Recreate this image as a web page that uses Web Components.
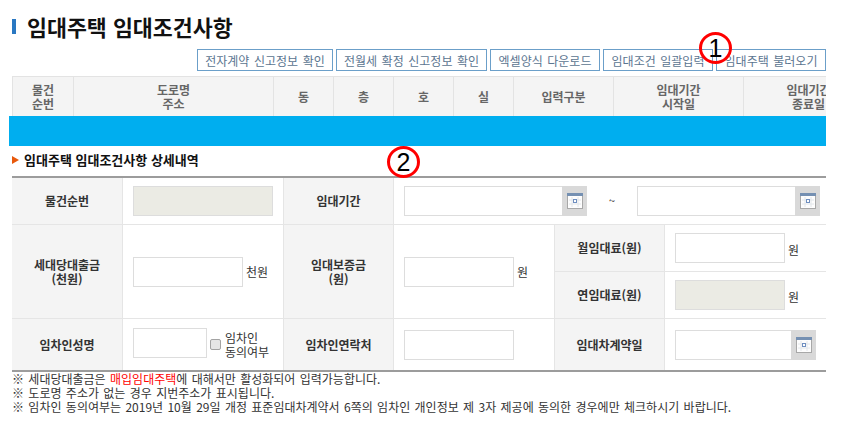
<!DOCTYPE html>
<html lang="ko">
<head>
<meta charset="utf-8">
<title>임대주택 임대조건사항</title>
<style>
  html, body { margin: 0; padding: 0; background: #fff; }
  body {
    width: 849px; height: 427px; overflow: hidden; position: relative;
    font-family: "Noto Sans CJK KR", "Noto Sans", sans-serif;
    color: #222;
  }
</style>
</head>
<body>
<rent-page>
  <page-title>임대주택 임대조건사항</page-title>
  <action-bar>
    <action-button style="width:136px">전자계약 신고정보 확인</action-button>
    <action-button style="width:151px">전월세 확정 신고정보 확인</action-button>
    <action-button style="width:110px">엑셀양식 다운로드</action-button>
    <action-button style="width:110px">임대조건 일괄입력</action-button>
    <action-button style="width:110px">임대주택 불러오기</action-button>
  </action-bar>
  <list-table></list-table>
  <section-head>임대주택 임대조건사항 상세내역</section-head>
  <detail-table>
    <detail-th style="grid-area:1/1/2/2">물건순번</detail-th>
    <detail-td style="grid-area:1/2/2/3"><text-field width="140" disabled></text-field></detail-td>
    <detail-th style="grid-area:1/3/2/4">임대기간</detail-th>
    <detail-td style="grid-area:1/4/2/7">
      <date-field width="158"></date-field>
      <span style="width:50px;margin-right:-3px;text-align:center;font-size:11px;margin-top:-3px;color:#222">~</span>
      <date-field width="158"></date-field>
    </detail-td>

    <detail-th style="grid-area:2/1/4/2">세대당대출금<br>(천원)</detail-th>
    <detail-td style="grid-area:2/2/4/3"><text-field width="110"></text-field><span>천원</span></detail-td>
    <detail-th style="grid-area:2/3/4/4">임대보증금<br>(원)</detail-th>
    <detail-td style="grid-area:2/4/4/5"><text-field width="110"></text-field><span>원</span></detail-td>
    <detail-th style="grid-area:2/5/3/6">월임대료(원)</detail-th>
    <detail-td style="grid-area:2/6/3/7"><text-field width="110"></text-field><span style="margin-top:3px">원</span></detail-td>
    <detail-th style="grid-area:3/5/4/6">연임대료(원)</detail-th>
    <detail-td style="grid-area:3/6/4/7"><text-field width="110" disabled></text-field><span style="margin-top:3px">원</span></detail-td>

    <detail-th style="grid-area:4/1/5/2">임차인성명</detail-th>
    <detail-td style="grid-area:4/2/5/3">
      <text-field width="74" style="margin-bottom:3px"></text-field>
      <agree-check>임차인<br>동의여부</agree-check>
    </detail-td>
    <detail-th style="grid-area:4/3/5/4">임차인연락처</detail-th>
    <detail-td style="grid-area:4/4/5/5"><text-field width="110"></text-field></detail-td>
    <detail-th style="grid-area:4/5/5/6">임대차계약일</detail-th>
    <detail-td style="grid-area:4/6/5/7"><date-field width="116"></date-field></detail-td>
  </detail-table>
  <note-list>
    <div>※ 세대당대출금은 <span style="color:#f00">매입임대주택</span>에 대해서만 활성화되어 입력가능합니다.</div>
    <div>※ 도로명 주소가 없는 경우 지번주소가 표시됩니다.</div>
    <div>※ 임차인 동의여부는 2019년 10월 29일 개정 표준임대차계약서 6쪽의 임차인 개인정보 제 3자 제공에 동의한 경우에만 체크하시기 바랍니다.</div>
  </note-list>
</rent-page>
<mark-circle style="left:699px;top:32px">1</mark-circle>
<mark-circle style="left:387px;top:146px">2</mark-circle>

<script>
  (() => {
    // small helper, every element below is just a style + markup
    let define = (name, html, extra) => {
      customElements.define(name, class extends HTMLElement {
        constructor() {
          super();
          this.root = this.attachShadow({mode: 'open'});
          this.root.innerHTML = typeof html === 'function' ? html(this) : html;
          if(extra) extra(this);
        }
      });
    };

    define('rent-page', `
      <style>:host { display: block; width: 826px; padding-top: 14px; }</style>
      <slot></slot>`);

    define('page-title', `
      <style>
        :host { display: flex; align-items: center; gap: 11px; height: 24px; margin-left: 12px;
          font-size: 21.7px; font-weight: 700; color: #111; }
        i { width: 4px; height: 15px; background: #2a78c2; }
      </style>
      <i></i><slot></slot>`);

    define('action-bar', `
      <style>:host { display: flex; justify-content: flex-end; gap: 3px; margin-top: 11px; }</style>
      <slot></slot>`);

    define('action-button', `
      <style>
        :host { display: flex; align-items: center; justify-content: center; box-sizing: border-box;
          height: 22px; border: 1px solid #6b9fc9; font-size: 12px; word-spacing: 1.2px; color: #5b7590; white-space: nowrap; }
      </style>
      <slot></slot>`);

    let columns = [
      [61, '물건<br>순번'], [200, '도로명<br>주소'], [60, '동'], [60, '층'], [60, '호'], [60, '실'],
      [100, '입력구분'], [130, '임대기간<br>시작일'], [130, '임대기간<br>종료일']
    ];
    define('list-table', `
      <style>
        :host { display: block; width: 817px; margin: 5px 0 0 9px; overflow: hidden; }
        .head { display: flex; margin-left: 3px; width: 871px; height: 40px; background: #f4f4f4;
          border-top: 1px solid #e3e3e3; box-sizing: border-box; }
        .head div { flex: none; box-sizing: border-box; height: 39px; border-left: 1px solid #e3e3e3;
          display: flex; align-items: center; justify-content: center; text-align: center;
          font-size: 12px; font-weight: 700; line-height: 14px; color: #666; }
        .band { height: 30px; background: #00aeef; }
      </style>
      <div class="head">${columns.map(c => `<div style="width:${c[0]}px">${c[1]}</div>`).join('')}</div>
      <div class="band"></div>`);

    define('section-head', `
      <style>
        :host { display: flex; align-items: center; gap: 5px; height: 30px; margin-left: 12px;
          font-size: 13px; font-weight: 700; color: #111; padding-bottom: 3px; box-sizing: border-box; }
        i { width: 0; height: 0; border-left: 7px solid #e8590c; border-top: 4px solid transparent; border-bottom: 4px solid transparent; }
      </style>
      <i></i><slot></slot>`);

    define('detail-table', `
      <style>
        :host { display: grid; margin-left: 12px; width: 814px;
          grid-template-columns: 111px 161px 110px 161px 110px 161px;
          grid-template-rows: 47px 47px 47px 51px;
          border-top: 2px solid #9c9c9c; border-bottom: 2px solid #9c9c9c; }
      </style>
      <slot></slot>`);

    define('detail-th', `
      <style>
        :host { display: flex; align-items: center; justify-content: center; text-align: center; box-sizing: border-box;
          background: #f4f4f4; border-right: 1px solid #e5e5e5; border-bottom: 1px solid #e5e5e5;
          font-size: 12px; font-weight: 700; line-height: 14px; color: #333; }
        :host([style*="grid-area:4"]) { border-bottom: 0; }
      </style>
      <slot></slot>`);

    define('detail-td', `
      <style>
        :host { display: flex; align-items: center; gap: 3px; box-sizing: border-box; padding-left: 10px;
          border-right: 1px solid #e5e5e5; border-bottom: 1px solid #e5e5e5;
          font-size: 12px; color: #333; }
        :host([style*="grid-area:4"]) { border-bottom: 0; }
        :host([style*="/7"]) { border-right: 0; }
        ::slotted(date-field) { margin-right: -3px; }
      </style>
      <slot></slot>`);

    define('text-field', el => `
      <style>
        :host { display: block; flex: none; width: ${el.getAttribute('width')}px; height: 30px; }
        input { display: block; box-sizing: border-box; width: 100%; height: 100%; margin: 0; padding: 0 4px;
          border: 1px solid #ddd; background: #fff; font: inherit; outline: 0; }
        input:disabled { background: #ebebe4; }
      </style>
      <input type="text" ${el.hasAttribute('disabled') ? 'disabled' : ''}>`);

    define('date-field', el => `
      <style>
        :host { display: flex; flex: none; height: 30px; }
        input { box-sizing: border-box; width: ${el.getAttribute('width')}px; height: 30px; margin: 0; padding: 0 4px;
          border: 1px solid #ddd; border-right: 0; background: #fff; outline: 0; }
        button { display: flex; align-items: center; justify-content: center; width: 25px; height: 30px;
          margin: 0; padding: 0; border: 0; background: #d9d9d9; }
      </style>
      <input type="text">
      <button type="button" aria-label="달력">
        <svg width="16" height="16" viewBox="0 0 16 16">
          <rect x=".5" y=".5" width="15" height="15" fill="#fdfdfd" stroke="#a8a8a8"/>
          <rect x="0" y="0" width="16" height="3" fill="#7590b2"/>
          <path d="M2 7h12M2 11h12M5 4v10M11 4v10" stroke="#e2e6ea" fill="none"/>
          <rect x="6.5" y="6.5" width="3" height="3" fill="#fff" stroke="#6f8fc0"/>
        </svg>
      </button>`);

    define('agree-check', `
      <style>
        :host { display: flex; align-items: center; gap: 4px; font-size: 12px; line-height: 14px; color: #333; }
        input { appearance: none; box-sizing: border-box; width: 11px; height: 11px; margin: 0; flex: none;
          border: 1px solid #a3a3a3; border-radius: 2px; background: #e6e6e6; }
      </style>
      <input type="checkbox" disabled><div><slot></slot></div>`);

    define('note-list', `
      <style>:host { display: block; margin-left: 12px; font-size: 12px; word-spacing: 1px; line-height: 14px; color: #333; white-space: nowrap; }</style>
      <slot></slot>`);

    // red hand drawn marks on top of the screenshot
    define('mark-circle', `
      <style>
        :host { position: absolute; display: flex; align-items: center; justify-content: center; box-sizing: border-box;
          width: 33px; height: 32px; border: 3px solid #f00; border-radius: 50%;
          font-family: "Liberation Sans", sans-serif; font-size: 25px; line-height: 25px; color: #000; }
      </style>
      <slot></slot>`);
  })();
</script>
</body>
</html>
